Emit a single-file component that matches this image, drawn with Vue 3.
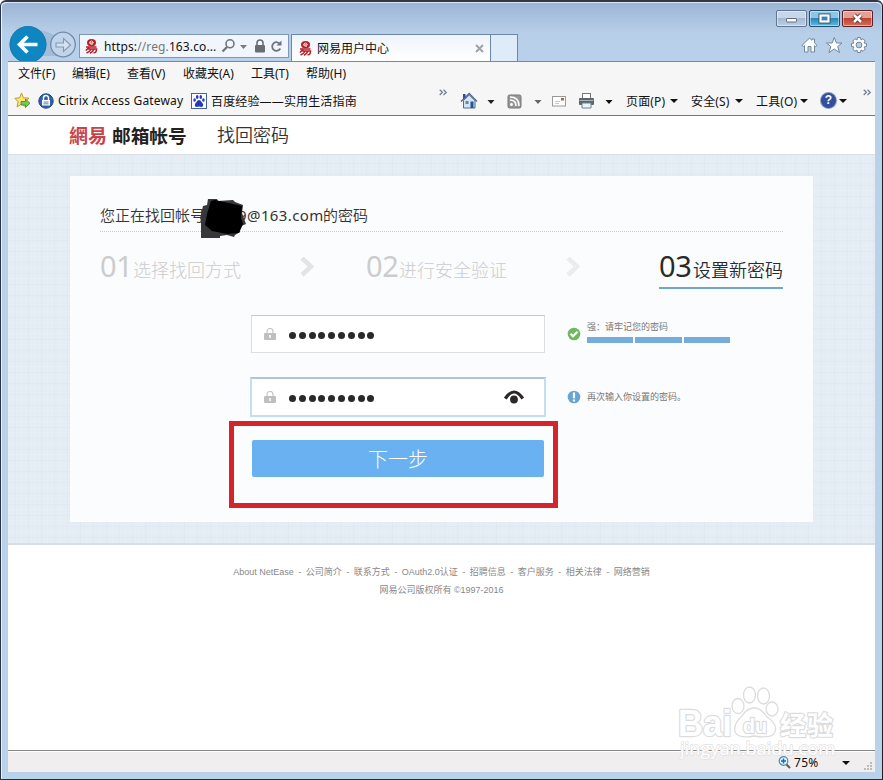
<script setup>
const menus = [
  { label: '文件(F)', w: 54 },
  { label: '编辑(E)', w: 55 },
  { label: '查看(V)', w: 56 },
  { label: '收藏夹(A)', w: 68 },
  { label: '工具(T)', w: 55 },
  { label: '帮助(H)', w: 54 }
]
const commands = [
  { label: '页面(P)', w: 65 },
  { label: '安全(S)', w: 65 },
  { label: '工具(O)', w: 65 }
]
const links = ['About NetEase', '公司简介', '联系方式', 'OAuth2.0认证', '招聘信息', '客户服务', '相关法律', '网络营销']
const dots = 9
</script>

<template>
  <div class="window">
    <header class="titlebar">
      <div class="nav">
        <svg class="navbtns" width="71" height="36" viewBox="0 0 71 36">
          <path d="M26 3 Q40 5 46 9 Q55 4 62 9 L62 30 L34 30Z" fill="#a3bdd8" />
          <circle cx="20" cy="18.500" r="18.500" fill="#0d86c1" />
          <circle cx="20" cy="18.500" r="17.800" fill="none" stroke="#237aa8" />
          <path d="M29.500 18.500H12 M19.500 10.500L11.500 18.500L19.500 26.500" fill="none" stroke="#fff" stroke-width="3.600" />
          <circle cx="55" cy="18.500" r="12.300" fill="#c2d4ea" stroke="#6f8dac" stroke-width="1.300" />
          <path d="M48 17h7.500v-4.500l7 6.500-7 6.500V21H48z" fill="#d4e1f0" stroke="#7f9ab8" stroke-width="1.100" />
        </svg>
        <div class="address">
          <svg class="fav" width="13" height="15" viewBox="0 0 13 15">
            <ellipse cx="6.500" cy="3.700" rx="4.500" ry="3.600" fill="#b51f27" />
            <path d="M4.700 4H8.300Q8 2 6.500 2Q4.600 2.200 4.700 4Q5 5.700 8 5.100" fill="none" stroke="#fff" stroke-width=".9" />
            <path d="M1 8H11.500 M4 8.500L.8 11.500 M3 10H11.500Q11.500 14 8.500 13.700 M6.300 10Q5 12.500 1.500 14 M9 10Q8 13 5 14.200" fill="none" stroke="#b51f27" stroke-width="1.500" />
          </svg>
          <span class="url">https:<i>//reg.</i>163.co...</span>
          <svg class="addricons" width="68" height="18" viewBox="0 0 68 18">
            <circle cx="12" cy="6.800" r="4" fill="none" stroke="#6d747d" stroke-width="1.600" />
            <path d="M9 10L4.500 14.500" stroke="#6d747d" stroke-width="2.300" />
            <path d="M22 8h7l-3.500 4z" fill="#767c85" />
            <rect x="37" y="8" width="10" height="7.500" rx="1" fill="#686d74" />
            <path d="M39 8V6a3 3 0 0 1 6 0v2" fill="none" stroke="#686d74" stroke-width="1.600" />
            <path d="M62.300 7.500A4.300 4.300 0 1 0 62.300 11.500" fill="none" stroke="#6d747d" stroke-width="1.800" />
            <path d="M63.500 3.500v5h-5z" fill="#6d747d" />
          </svg>
        </div>
        <div class="tab">
          <svg class="fav" width="13" height="15" viewBox="0 0 13 15">
            <ellipse cx="6.500" cy="3.700" rx="4.500" ry="3.600" fill="#b51f27" />
            <path d="M4.700 4H8.300Q8 2 6.500 2Q4.600 2.200 4.700 4Q5 5.700 8 5.100" fill="none" stroke="#fff" stroke-width=".9" />
            <path d="M1 8H11.500 M4 8.500L.8 11.500 M3 10H11.500Q11.500 14 8.500 13.700 M6.300 10Q5 12.500 1.500 14 M9 10Q8 13 5 14.200" fill="none" stroke="#b51f27" stroke-width="1.500" />
          </svg>
          <span class="tabname">网易用户中心</span>
          <svg width="9" height="9" viewBox="0 0 9 9"><path d="M1 1L8 8M8 1L1 8" stroke="#a0a4a9" stroke-width="2" /></svg>
        </div>
        <div class="newtab"></div>
      </div>
      <div class="right">
        <div class="winbtns">
          <span class="wb min"><svg width="29" height="15" viewBox="0 0 29 15"><rect x="9.500" y="7.500" width="10" height="3.500" rx=".5" fill="#fff" stroke="#626e7e" /></svg></span>
          <span class="wb max"><svg width="29" height="15" viewBox="0 0 29 15"><rect x="10.500" y="4.500" width="8" height="6" fill="none" stroke="#314b64" stroke-width="4" /><rect x="10.500" y="4.500" width="8" height="6" fill="#3d86b4" stroke="#fff" stroke-width="2.200" /></svg></span>
          <span class="wb close"><svg width="29" height="15" viewBox="0 0 29 15"><path d="M11 4L18 11M18 4L11 11" stroke="#5f2d36" stroke-width="4.400" /><path d="M11 4L18 11M18 4L11 11" stroke="#fff" stroke-width="2.600" /></svg></span>
        </div>
        <svg class="tools" width="66" height="18" viewBox="0 0 66 18">
          <g fill="#fff" stroke="#71859c" stroke-width="1">
            <path d="M1 9.500L8.500 2L11 4.300V3H13.500V6.800L16 9.500L14.500 10.500L13.500 9.700V16H10V10.500H7V16H3.500V9.700L2.500 10.500Z" />
            <path d="M33.300 1.500L35.500 7H41L36.700 10.500L38.500 16.500L33.300 13L28 16.500L29.800 10.500L25.500 7H31.200Z" />
            <path d="M56.500 1.500H59.500L60 4L62 2.700L64.200 5L63 7L65.500 7.500V10.500L63 11L64.200 13L62 15.300L60 14L59.500 16.500H56.500L56 14L54 15.300L51.800 13L53 11L50.500 10.500V7.500L53 7L51.800 5L54 2.700L56 4Z" />
            <circle cx="58" cy="9" r="2.900" fill="#b9cfe9" />
          </g>
        </svg>
      </div>
    </header>

    <nav class="menubar">
      <span v-for="m in menus" :key="m.label" :style="{ width: m.w + 'px' }">{{ m.label }}</span>
    </nav>

    <div class="favbar">
      <svg class="i-star" width="17" height="17" viewBox="0 0 17 17">
        <path d="M7.500 1L9.500 5.800L15 6.200L11 9.600L12 15L7.500 12L3 15L4.100 9.700L.8 6.300L5.600 5.800Z" fill="#ffe67a" stroke="#c39a30" />
        <path d="M7 9.500H11.500V7L16 11.200L11.500 15.500V13H7Z" fill="#76c850" stroke="#388a2c" stroke-width=".8" />
      </svg>
      <svg class="i-citrix" width="16" height="16" viewBox="0 0 16 16">
        <circle cx="8" cy="8" r="7.200" fill="#3161a8" stroke="#1e437e" />
        <rect x="4" y="7" width="8" height="5.500" fill="#fff" /><path d="M5.500 7V5a2.500 2.500 0 0 1 5 0v2" fill="none" stroke="#fff" stroke-width="1.400" /><path d="M5.500 9H10.500M5.500 10.800H10.500" stroke="#3161a8" stroke-width=".8" />
      </svg>
      <span class="citrix">Citrix Access Gateway</span>
      <svg class="i-baidu" width="16" height="16" viewBox="0 0 16 16">
        <rect x=".5" y=".5" width="15" height="15" fill="#fff" stroke="#43659c" />
        <g fill="#2636bd"><ellipse cx="3.600" cy="7" rx="1.300" ry="1.800" /><ellipse cx="6.200" cy="4" rx="1.300" ry="1.900" /><ellipse cx="9.800" cy="4" rx="1.300" ry="1.900" /><ellipse cx="12.400" cy="7" rx="1.300" ry="1.800" /><path d="M8 7Q9.500 7 10.500 9Q13 11 12 13Q11 14.500 8 13.500Q5 14.500 4 13Q3 11 5.500 9Q6.500 7 8 7Z" /></g>
      </svg>
      <span class="exp">百度经验——实用生活指南</span>
      <svg class="chev" width="8" height="7" viewBox="0 0 8 7"><path d="M.7.700L3.500 3.300L.7 6M4.500.700L7.300 3.300L4.500 6" fill="none" stroke="#6f7b90" stroke-width="1.200" /></svg>
      <svg class="cmdicons" width="158" height="18" viewBox="0 0 158 18">
        <path d="M3.500 8.500V16H15V8.500L9.200 3Z" fill="#d4e5f6" stroke="#536b91" />
        <path d="M1 9.500L9.200 1.500L17 9.500" fill="none" stroke="#536b91" stroke-width="1.500" /><path d="M3 2H5.500V5L3 7Z" fill="#34498a" />
        <rect x="5.500" y="9" width="3" height="3" fill="#74819a" /><rect x="10.500" y="9.500" width="3" height="6.500" fill="#24568f" />
        <path d="M27.500 8h7l-3.500 4z" fill="#222" />
        <rect x="48" y="3" width="13" height="13" rx="1.500" fill="#969696" stroke="#777" />
        <circle cx="51.500" cy="12.500" r="1.400" fill="#fff" /><path d="M50 8Q56 8 56 14M50 5Q59 5 59 14" fill="none" stroke="#fff" stroke-width="1.600" />
        <path d="M74.500 8h7l-3.500 4z" fill="#666" />
        <rect x="92.500" y="4.500" width="13" height="9.500" fill="#fff" stroke="#999" /><rect x="101" y="6" width="3" height="2.500" fill="#c05a50" /><path d="M95 9.500H100M95 11.500H99" stroke="#c9c9c9" />
        <rect x="122.500" y="1.500" width="8" height="6" fill="#fff" stroke="#777" /><rect x="119" y="6" width="15" height="7" rx="1" fill="#5d666d" /><path d="M119.500 8.500H133.500" stroke="#a9b2b5" /><path d="M122 11H131V16H122Z" fill="#e8f5fb" stroke="#70808a" />
        <path d="M145.500 8h7l-3.500 4z" fill="#111" />
      </svg>
      <span v-for="c in commands" :key="c.label" class="cmd" :style="{ width: c.w + 'px' }">
        <span class="cmdtext">{{ c.label }}</span><i class="caret"></i>
      </span>
      <span class="help">?</span><i class="caret helpcaret"></i>
      <svg class="chev last" width="8" height="7" viewBox="0 0 8 7"><path d="M.7.700L3.500 3.300L.7 6M4.500.700L7.300 3.300L4.500 6" fill="none" stroke="#6f7b90" stroke-width="1.200" /></svg>
    </div>

    <main class="page">
      <div class="brand">
        <span class="netease">網易</span><b>邮箱帐号</b><span class="sub">找回密码</span>
      </div>
      <section class="backdrop">
        <div class="card">
          <h1>
            <span>您正在找回帐号</span><span class="hidden"></span><span class="mail">9@163.com</span><span>的密码</span>
            <svg class="scribble" width="48" height="42" viewBox="0 0 48 42">
              <path d="M8 1H17L18 3L33 2L35 4L43 7L42 15L46 26L39 29L40 34L35 37L34 39L27 37L20 38V40H1V22L0 20L3 8L7 7Z" fill="#37373a" />
              <path d="M11 3L15 2L42 8L41 20L43 26L39 35L27 36L12 33L5 27L7 16Z" fill="#000" />
            </svg>
          </h1>
          <div class="steps">
            <div class="step s1"><em>01</em><span>选择找回方式</span></div>
            <svg class="arrow" width="17" height="20" viewBox="0 0 17 20"><path d="M2 1L11 9.500L2 18" fill="none" stroke="#e4e4e4" stroke-width="4.500" /></svg>
            <div class="step s2"><em>02</em><span>进行安全验证</span></div>
            <svg class="arrow" width="17" height="20" viewBox="0 0 17 20"><path d="M2 1L11 9.500L2 18" fill="none" stroke="#ececec" stroke-width="4.500" /></svg>
            <div class="step active"><em>03</em><span>设置新密码</span></div>
          </div>
          <div class="row first">
            <div class="field">
              <svg class="lock" width="12" height="12" viewBox="0 0 12 12"><rect y="5" width="12" height="7" rx="1" fill="#bfbfbf" /><path d="M3 5V3.500a3 3 0 0 1 6 0V5" fill="none" stroke="#c5c5c5" stroke-width="1.200" /><path d="M6 7v3" stroke="#fff" stroke-width="1.500" /></svg>
              <span class="dots"><i v-for="n in dots" :key="n"></i></span>
            </div>
            <svg class="badge" width="14" height="14" viewBox="0 0 14 14"><circle cx="7" cy="7" r="6.300" fill="#71b761" /><path d="M3.500 6.800L6 9.300L10.500 4.700" fill="none" stroke="#fff" stroke-width="2.100" /></svg>
            <div class="strength"><span>强：请牢记您的密码</span><div class="bars"><i></i><i></i><i></i></div></div>
          </div>
          <div class="row second">
            <div class="field focus">
              <svg class="lock" width="12" height="12" viewBox="0 0 12 12"><rect y="5" width="12" height="7" rx="1" fill="#bfbfbf" /><path d="M3 5V3.500a3 3 0 0 1 6 0V5" fill="none" stroke="#c5c5c5" stroke-width="1.200" /><path d="M6 7v3" stroke="#fff" stroke-width="1.500" /></svg>
              <span class="dots"><i v-for="n in dots" :key="n"></i></span>
              <svg class="eye" width="20" height="14" viewBox="0 0 20 14"><path d="M1.300 8.500Q10-4.500 18.700 8.500" fill="none" stroke="#2c2828" stroke-width="3.200" /><circle cx="10" cy="9.500" r="3.900" fill="#2c2828" /></svg>
            </div>
            <svg class="badge" width="14" height="14" viewBox="0 0 14 14"><circle cx="7" cy="7" r="6.300" fill="#67a3d3" /><path d="M7 2.500v5.700M7 9.500v2" stroke="#fff" stroke-width="2.200" /></svg>
            <span class="tip">再次输入你设置的密码。</span>
          </div>
          <button class="submit">下一步</button>
          <div class="highlight"></div>
        </div>
      </section>
      <footer>
        <p><template v-for="(l, i) in links" :key="l"><span v-if="i" class="sep">-</span><span>{{ l }}</span></template></p>
        <p class="copy">网易公司版权所有 ©1997-2016</p>
      </footer>
    </main>

    <div class="status">
      <svg width="13" height="13" viewBox="0 0 13 13"><path d="M8 8L12 12" stroke="#6b5a50" stroke-width="2.200" /><circle cx="5.500" cy="5" r="4.300" fill="#e1f3fc" stroke="#4b8db8" stroke-width="1.200" /><path d="M5.500 2.500v5M3 5h5" stroke="#23679a" stroke-width="1.500" /></svg>
      <span class="zoom">75%</span><i class="caret"></i>
      <svg class="grip" width="9" height="9" viewBox="0 0 9 9"><path d="M6 0h2v2h-2zM3 3h2v2h-2zM6 3h2v2h-2zM0 6h2v2h-2zM3 6h2v2h-2zM6 6h2v2h-2z" fill="#bbb" /></svg>
    </div>

    <svg class="watermark" width="170" height="90" viewBox="0 0 170 90">
      <g fill="#fff" stroke="#dcdcdc" stroke-width="1.300">
        <ellipse cx="66" cy="26" rx="6" ry="7.500" /><ellipse cx="77.500" cy="15" rx="6" ry="8" /><ellipse cx="91.500" cy="16" rx="6" ry="8" /><ellipse cx="100" cy="29" rx="6" ry="7" />
        <path d="M82 28Q89 28 95 37Q106 44 103 52Q100 59 82 56Q67 59 63 52Q61 44 70 36Q75 28 82 28Z" />
        <text x="6" y="56" class="wm" font-size="36" textLength="54" lengthAdjust="spacingAndGlyphs">Bai</text>
        <text x="71" y="53" class="wm" font-size="21" textLength="24" lengthAdjust="spacingAndGlyphs">du</text>
        <text x="108" y="55" class="wm cjk" font-size="26" textLength="53">经验</text>
        <text x="8" y="75" class="wm url2" font-size="19" textLength="155" lengthAdjust="spacingAndGlyphs">jingyan.baidu.com</text>
      </g>
    </svg>
  </div>
</template>

<style>
body { margin: 0; overflow: hidden; }
</style>

<style scoped>
* { box-sizing: border-box; }
i, em { font-style: normal; }
svg { flex: none; display: block; }
.window {
  position: relative; width: 883px; height: 780px; display: flex; flex-direction: column;
  padding: 1px 7px 7px 7px; border: 1px solid #26354a; border-top: 2px solid #303849; border-right-color: #10222f; border-bottom-color: #10384c;
  border-radius: 6px 6px 0 0; background: #b9d1e9; font-family: "Noto Sans", "Noto Sans CJK SC", sans-serif; font-size: 12px; color: #111;
  box-shadow: inset 1px 1px 0 #eaf3fb;
}
.titlebar { height: 59px; flex: none; margin: -1px -6px 0; padding: 0 6px; display: flex; justify-content: space-between; background: linear-gradient(#9ab5d4, #b8cfe9 52%, #b9d0ea); border-top: 1px solid #dbe8f4; border-radius: 5px 5px 0 0; }
.nav { display: flex; align-items: flex-start; }
.navbtns { margin-top: 23px; }
.address { width: 210px; height: 24px; margin-top: 31px; border: 1px solid #7d97b2; background: #f1f6fc; display: flex; align-items: center; padding-left: 5px; }
.url { width: 113px; margin-left: 6px; font-size: 12px; letter-spacing: .12px; white-space: nowrap; }
.url i { color: #777; }
.addricons { margin-left: 1px; }
.tab { width: 200px; height: 27px; margin: 31px 0 0 2px; border: 1px solid #6c88a6; border-bottom: 0; background: linear-gradient(#eef4fb, #fff); display: flex; align-items: center; padding: 0 6px 0 7px; }
.tabname { margin-left: 5px; flex: 1; }
.newtab { width: 27px; height: 27px; margin-top: 31px; border: 1px solid #6c88a6; border-left: 0; border-bottom: 0; background: #deebf9; }
.right { display: flex; flex-direction: column; align-items: flex-end; }
.winbtns { display: flex; gap: 2px; margin: 7px 2px 0 0; }
.wb { width: 31px; height: 17px; border: 1px solid #5f7591; border-radius: 2px; box-shadow: inset 0 0 0 1px rgba(255,255,255,.45); background: linear-gradient(#c7d7e9 45%, #a5bad2 50%, #bbcfe5); }
.wb.max { border-color: #234c6e; background: linear-gradient(#8dc6e5 45%, #2e85b7 50%, #56bce0); }
.wb.close { border-color: #5c2029; background: linear-gradient(#e4a094 45%, #bd4230 50%, #d4705b); }
.tools { margin: 9px 8px 0 0; }
.menubar { height: 26px; flex: none; border-top: 1px solid #76899e; background: #f6f6f6; padding: 0 0 3px 10px; display: flex; align-items: center; white-space: nowrap; }
.favbar { height: 29px; flex: none; background: #f6f6f6; border-bottom: 1px solid #75757b; padding: 0 0 1px 6px; display: flex; align-items: center; white-space: nowrap; }
.i-citrix { margin-left: 7px; }
.citrix { width: 126px; margin-left: 4px; letter-spacing: .17px; }
.i-baidu { margin-left: 7px; }
.exp { width: 147px; margin-left: 4px; letter-spacing: .15px; }
.chev { margin: 0 0 17px 81px; }
.cmdicons { margin: 0 8px 0 13px; }
.cmd { display: flex; align-items: center; justify-content: space-between; padding-right: 13px; }
.cmdtext { letter-spacing: .15px; }
.caret { width: 0; height: 0; border: 4px solid transparent; border-top: 4px solid #111; border-bottom: 0; flex: none; }
.help { width: 15px; height: 15px; border-radius: 50%; background: #304f9e; box-shadow: 0 0 0 1px #8d9ab9; color: #fff; font: bold 12px/15px "Liberation Sans", sans-serif; text-align: center; }
.helpcaret { margin-left: 3px; }
.chev.last { margin-left: 16px; }
.page { flex: 1; min-height: 0; background: #fff; display: flex; flex-direction: column; }
.brand { height: 38px; flex: none; padding: 0 0 2px 61px; display: flex; align-items: center; white-space: nowrap; }
.netease { width: 43px; font: 700 19px "Noto Sans CJK TC", sans-serif; color: #c9444a; }
.brand b { width: 105px; font-size: 18.700px; color: #222; }
.sub { font-size: 18px; color: #333; font-weight: 350; }
.backdrop {
  height: 391px; flex: none; padding: 21px 0 0 62px; border-top: 1px solid #d9e0e6; border-bottom: 2px solid #d7dfe5; background-color: #e4ecf4;
  background-image: repeating-linear-gradient(90deg, rgba(255,255,255,.12) 0 1px, transparent 1px 7px, rgba(190,207,222,.1) 7px 8px, transparent 8px 13px), repeating-linear-gradient(0deg, rgba(255,255,255,.12) 0 1px, transparent 1px 5px, rgba(190,207,222,.1) 5px 6px, transparent 6px 11px);
}
.card { position: relative; width: 743px; height: 346px; padding: 0 30px; background: #fbfcfe; }
h1 { position: relative; margin: 0; height: 56px; padding-top: 28px; border-bottom: 1px dotted #ccc; font-size: 15px; line-height: 22px; font-weight: 350; color: #333; display: flex; white-space: nowrap; }
.hidden { width: 33px; }
.mail { width: 85px; font-weight: 400; font-size: 15px; letter-spacing: .4px; }
.scribble { position: absolute; left: 100px; top: 22px; }
.steps { display: flex; height: 57px; align-items: flex-start; padding-top: 15px; }
.step { display: flex; align-items: baseline; height: 42px; color: #ccc; white-space: nowrap; font-weight: 300; line-height: 38px; }
.step em { width: 33px; font: 29px/38px "Noto Sans", sans-serif; letter-spacing: -.3px; }
.step span { font-size: 18px; line-height: 30px; }
.s1 { width: 200px; } .s2 { width: 200px; }
.arrow { margin-top: 10px; margin-right: 49px; }
.step.active { width: 124px; margin-left: 27px; color: #2a2a2a; border-bottom: 2px solid #6fa8cb; font-weight: 350; }
.step.active em { width: 34px; }
.row { display: flex; align-items: center; margin-left: 150px; height: 40px; }
.first { margin-top: 25px; }
.second { margin-top: 23px; }
.field { width: 296px; height: 38px; border: 1px solid #dedede; border-top-color: #c5c8c8; background: #fff; display: flex; align-items: center; padding-left: 12px; }
.first .field { width: 294px; margin: 0 1px; }
.field.focus { height: 40px; border: 2px solid #c1dff0; border-top-color: #abc7d6; }
.dots { display: flex; gap: 2.800px; margin-left: 13px; padding-top: 2px; }
.dots i { width: 7px; height: 7px; border-radius: 50%; background: #2a2828; }
.eye { margin-left: 130px; }
.badge { margin-left: 21px; }
.first .badge { margin-left: 21px; }
.strength { margin-left: 6px; font-size: 9px; line-height: 12px; color: #777; height: 26px; white-space: nowrap; }
.bars { display: flex; gap: 2px; margin-top: 4px; }
.bars i { width: 46.300px; height: 6px; background: #73acdd; }
.tip { margin-left: 6px; padding-bottom: 1px; font-size: 9px; color: #777; white-space: nowrap; }
.submit { display: block; width: 292px; height: 37px; margin: 23px 0 0 152px; padding: 0; border: 0; border-radius: 2px; background: #69b1f1; color: #fff; font-family: "Noto Sans CJK SC", sans-serif; font-size: 20px; font-weight: 300; }
.highlight { position: absolute; left: 159px; top: 245px; width: 329px; height: 87px; border: 5px solid #d4252c; }
footer { padding-top: 21px; font: 9px/13px "Liberation Sans", "Noto Sans CJK SC", sans-serif; color: #888; }
footer p { margin: 0; display: flex; justify-content: center; white-space: nowrap; }
.sep { width: 12px; text-align: center; }
footer .copy { margin-top: 5px; }
.status { height: 22px; flex: none; border-top: 1px solid #888; background: #f0eeee; display: flex; align-items: center; padding: 2px 2px 0 770px; box-shadow: inset 0 1px 0 #fff; }
.zoom { width: 53px; margin-left: 3px; letter-spacing: .3px; }
.grip { margin: 8px 0 0 14px; }
.watermark { position: absolute; left: 671px; top: 678px; }
.wm { font-family: "Liberation Sans", sans-serif; font-weight: 700; paint-order: stroke; stroke-width: 2.400px; stroke-linejoin: round; }
.cjk { font-family: "Noto Sans CJK SC", sans-serif; }
.url2 { font-family: "Open Sans", sans-serif; font-weight: 400; stroke: #e2e2e2; stroke-width: 1.600px; }
</style>
